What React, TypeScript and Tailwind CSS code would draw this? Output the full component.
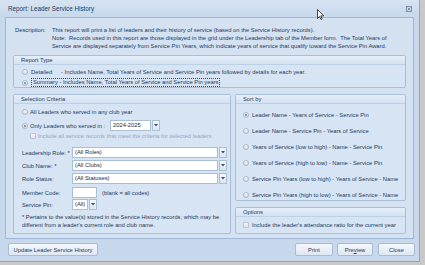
import React from 'react';

const Radio: React.FC<{ checked?: boolean }> = ({ checked }) => (
  <span className="w-[6px] h-[6px] rounded-full border border-[#a9b8c9] bg-gradient-to-b from-[#f7f8fa] to-[#d8dde4] flex items-center justify-center shrink-0">
    {checked && <span className="w-[2px] h-[2px] rounded-full bg-[#6c7b8e]" />}
  </span>
);

const Check: React.FC = () => (
  <span className="w-[6px] h-[6px] rounded-[1px] border border-[#b9c5d2] bg-gradient-to-b from-[#f4f6f8] to-[#dde2e8] shrink-0" />
);

const Group: React.FC<{ title: string; className?: string; children: React.ReactNode }> = ({ title, className, children }) => (
  <div className={`border border-[#a9bfd8] rounded-[2px] bg-[#d6e4f4] flex flex-col ${className ?? ''}`}>
    <div className="h-[9px] leading-[9px] px-[7px] bg-gradient-to-b from-[#e4eef9] to-[#d4e2f3] border-b border-[#bcd0e6]">{title}</div>
    {children}
  </div>
);

const DropBtn: React.FC = () => (
  <span className="w-[8px] h-full border border-[#a9bfd6] bg-gradient-to-b from-[#f4f8fc] to-[#dbe6f2] flex items-center justify-center ml-[1px]">
    <svg width="4" height="3" viewBox="0 0 4 3"><path d="M0 0h4L2 2.5z" fill="#38506d" /></svg>
  </span>
);

const Combo: React.FC<{ value: string; width: string }> = ({ value, width }) => (
  <div className="flex h-[11px]">
    <div className={`${width} h-full bg-white border border-[#a9bfd6] pl-[2px] leading-[9px] text-[#1e2a3a]`}>{value}</div>
    <DropBtn />
  </div>
);

const Button: React.FC<{ className?: string; children: React.ReactNode }> = ({ className, children }) => (
  <div className={`h-[13px] border border-[#a9bcd3] rounded-[2px] bg-gradient-to-b from-[#f3f7fb] to-[#dde7f3] flex items-center justify-center ${className ?? ''}`}>
    {children}
  </div>
);

const sortOptions = [
  'Leader Name - Years of Service - Service Pin',
  'Leader Name - Service Pin - Years of Service',
  'Years of Service (low to high) - Name - Service Pin',
  'Years of Service (high to low) - Name - Service Pin',
  'Service Pin Years (low to high) - Years of Service - Name',
  'Service Pin Years (high to low) - Years of Service - Name',
];

const fields = [
  { label: 'Leadership Role: *', value: '(All Roles)' },
  { label: 'Club Name: *', value: '(All Clubs)' },
  { label: 'Role Status:', value: '(All Statuses)' },
];

export default function App() {
  return (
    <div className="w-[425px] h-[265px] bg-[#c8c8c8] relative overflow-hidden whitespace-nowrap font-['Liberation_Sans',Arial,sans-serif] text-[5.8px] leading-[8px] text-[#1e395b]">
      <div className="w-[420px] h-[262px] bg-[#c7d8ec] border-r border-b border-[#8fa7c4] flex flex-col">
        {/* title bar */}
        <div className="h-[17px] flex items-center justify-between pl-[8px] pr-[6px] bg-gradient-to-b from-[#d6e3f2] to-[#c7d8ec]">
          <span className="text-[6.3px]">Report: Leader Service History</span>
          <svg width="6" height="6" viewBox="0 0 6 6" className="mr-[1px]">
            <rect x="0.5" y="0.5" width="5" height="5" fill="none" stroke="#6b7f99" strokeWidth="0.8" />
            <path d="M1.5 1.5l3 3M4.5 1.5l-3 3" stroke="#6b7f99" strokeWidth="0.8" />
          </svg>
        </div>

        {/* inner panel */}
        <div className="mx-[5px] h-[222px] border border-[#9fb7d4] bg-[#d3e1f1] flex flex-col px-[7px] pt-[8px]">
          <div className="flex pl-[2px]">
            <span className="w-[37px] shrink-0">Description:</span>
            <div className="flex flex-col">
              <span>This report will print a list of leaders and their history of service (based on the Service History records).</span>
              <span>Note:&nbsp; Records used in this report are those displayed in the grid under the Leadership tab of the Member form.&nbsp; The Total Years of</span>
              <span>Service are displayed separately from Service Pin Years, which indicate years of service that qualify toward the Service Pin Award.</span>
            </div>
          </div>

          <Group title="Report Type" className="mt-[5px] h-[33px]">
            <div className="flex flex-col pl-[8px] pt-[1px]">
              <div className="h-[11px] flex items-center gap-[2px]">
                <Radio />
                <span className="w-[28px] ml-[1px]">Detailed</span>
                <span>- Includes Name, Total Years of Service and Service Pin years followed by details for each year.</span>
              </div>
              <div className="h-[11px] flex items-center gap-[2px]">
                <Radio checked />
                <span className="ml-[1px] px-[1px] border border-dotted border-[#3a4a60] leading-[7px]">Summary - Includes Name, Total Years of Service and Service Pin years</span>
              </div>
            </div>
          </Group>

          <div className="flex gap-[4px] mt-[6px]">
            <Group title="Selection Criteria" className="w-[218px] h-[140px]">
              <div className="flex flex-col pl-[8px] pt-[2px]">
                <div className="h-[11px] flex items-center gap-[2px]">
                  <Radio />
                  <span>All Leaders who served in any club year</span>
                </div>
                <div className="h-[11px] mt-[3px] flex items-center gap-[2px]">
                  <Radio checked />
                  <span className="w-[78px]">Only Leaders who served in :</span>
                  <Combo value="2024-2025" width="w-[41px]" />
                </div>
                <div className="h-[10px] flex items-center gap-[2px] pl-[8px] text-[#9aa8b9]">
                  <Check />
                  <span>Include all service records that meet the criteria for selected leaders</span>
                </div>
                <div className="flex flex-col gap-[2px] mt-[6px]">
                  {fields.map((f) => (
                    <div key={f.label} className="flex items-center h-[11px]">
                      <span className="w-[50px] shrink-0">{f.label}</span>
                      <Combo value={f.value} width="w-[146px]" />
                    </div>
                  ))}
                </div>
                <div className="flex items-center h-[11px] mt-[3px]">
                  <span className="w-[50px] shrink-0">Member Code:</span>
                  <span className="w-[25px] h-full bg-white border border-[#a9bfd6]" />
                  <span className="ml-[5px]">(blank = all codes)</span>
                </div>
                <div className="flex items-center h-[11px] mt-[1px]">
                  <span className="w-[50px] shrink-0">Service Pin:</span>
                  <Combo value="(All)" width="w-[16px]" />
                </div>
                <div className="flex flex-col mt-[3px] pr-[4px]">
                  <span>* Pertains to the value(s) stored in the Service History records, which may be</span>
                  <span>different from a leader's current role and club name.</span>
                </div>
              </div>
            </Group>

            <div className="flex-1 flex flex-col gap-[6px]">
              <Group title="Sort by" className="h-[107px]">
                <div className="flex flex-col pl-[7px] pt-[3px]">
                  {sortOptions.map((s, i) => (
                    <div key={s} className="h-[16px] flex items-center gap-[2px]">
                      <Radio checked={i === 0} />
                      <span className="ml-[1px]">{s}</span>
                    </div>
                  ))}
                </div>
              </Group>
              <Group title="Options" className="h-[27px]">
                <div className="h-[15px] flex items-center gap-[3px] pl-[7px]">
                  <Check />
                  <span>Include the leader's attendance ratio for the current year</span>
                </div>
              </Group>
            </div>
          </div>
        </div>

        {/* buttons */}
        <div className="flex items-center mt-[4px] pl-[8px] pr-[4px]">
          <Button className="w-[90px]">Update Leader Service History</Button>
          <div className="flex-1" />
          <Button className="w-[38px]">Print</Button>
          <Button className="w-[36px] ml-[4px]">
            Pre<span className="underline">v</span>iew
          </Button>
          <Button className="w-[37px] ml-[5px]">Close</Button>
        </div>
      </div>

      {/* mouse pointer */}
      <svg className="absolute left-[317px] top-[9px]" width="7" height="11" viewBox="0 0 7 11">
        <path d="M0.5 0.5v9l2-2 1.5 3 1.2-.6-1.5-3h3z" fill="#fff" stroke="#000" strokeWidth="0.7" />
      </svg>
    </div>
  );
}
